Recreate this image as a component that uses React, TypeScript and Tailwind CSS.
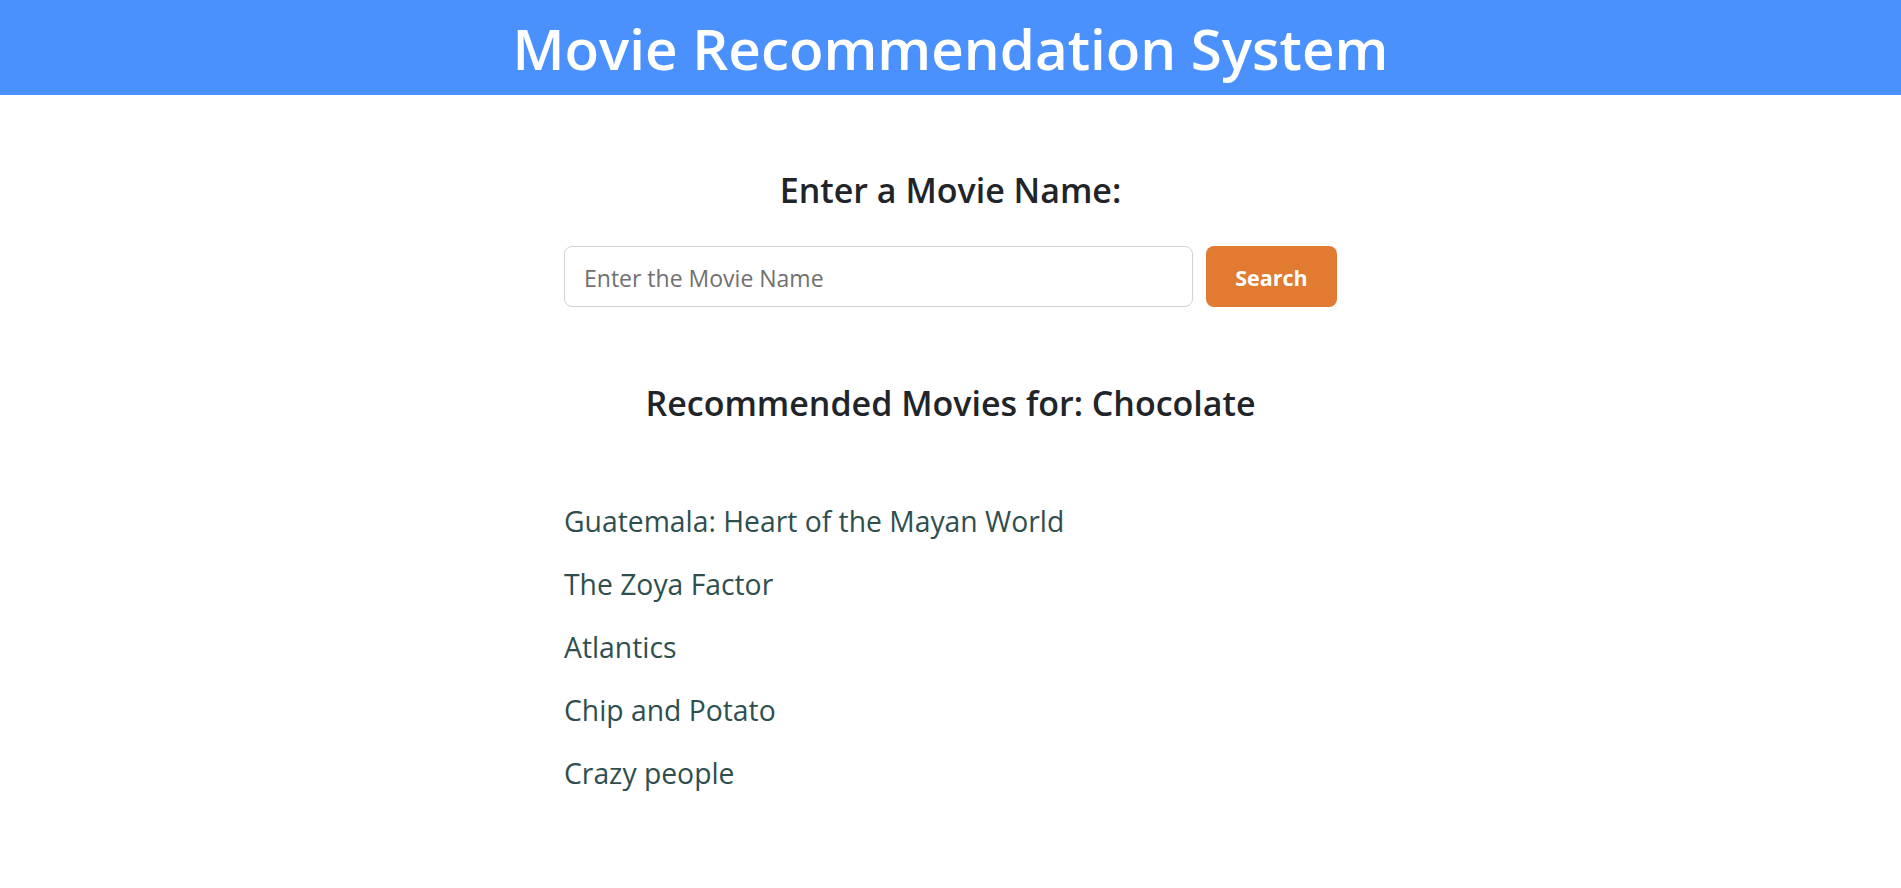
import { useState } from 'react';

const MOVIES = [
  'Guatemala: Heart of the Mayan World',
  'The Zoya Factor',
  'Atlantics',
  'Chip and Potato',
  'Crazy people',
];

export default function App() {
  const [query, setQuery] = useState('');

  return (
    <div className="min-h-screen bg-white font-['Open_Sans',_'Liberation_Sans',_sans-serif]">
      {/* Top banner */}
      <header className="h-[95px] bg-[#4a91fe] flex items-center justify-center pt-1">
        <h1 className="text-white text-[56.5px] font-semibold leading-none">Movie Recommendation System</h1>
      </header>

      <main className="w-[773px] mx-auto">
        <h2 className="mt-[78px] text-center text-[34px] leading-none font-semibold text-[#212529]">
          Enter a Movie Name:
        </h2>

        <form className="mt-[39px] flex gap-[13px]" onSubmit={(e) => e.preventDefault()}>
          <input
            type="text"
            value={query}
            onChange={(e) => setQuery(e.target.value)}
            placeholder="Enter the Movie Name"
            className="flex-1 h-[61px] border border-[#ced4da] rounded-lg px-[19px] pt-[3px] text-[23px] text-[#212529] placeholder:text-[#707070] outline-none"
          />
          <button
            type="submit"
            className="w-[131px] h-[61px] rounded-lg bg-[#e07b31] pt-[3px] text-white text-[21.5px] font-bold"
          >
            Search
          </button>
        </form>

        <h2 className="mt-[79px] text-center text-[34px] leading-none font-semibold text-[#212529]">
          Recommended Movies for: Chocolate
        </h2>

        <ul className="mt-[70px]">
          {MOVIES.map((m) => (
            <li key={m} className="text-[28.3px] leading-[63px] text-[#2f4f4f]">
              {m}
            </li>
          ))}
        </ul>
      </main>
    </div>
  );
}
